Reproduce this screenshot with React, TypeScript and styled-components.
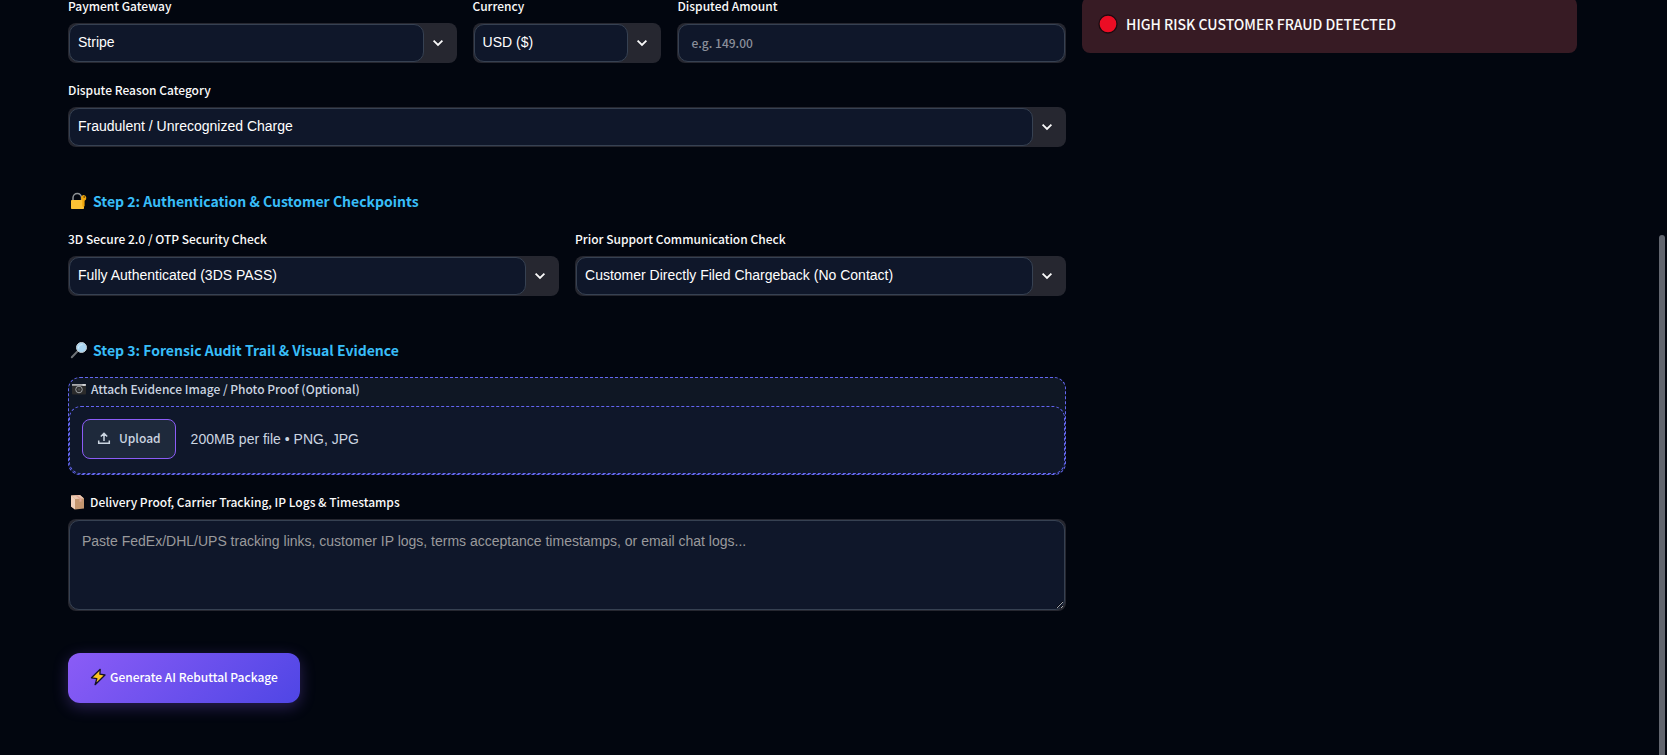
import React, { useId } from "react";
import styled, { createGlobalStyle, css } from "styled-components";

const sans = `"Noto Sans CJK SC", "Noto Sans", sans-serif`;
const arial = `"Liberation Sans", Arial, sans-serif`;

const GlobalStyle = createGlobalStyle`
  *, *::before, *::after { box-sizing: border-box; }
  html, body { margin: 0; background: #02060f; }
  body { color: #fafafa; font-family: ${sans}; overflow: hidden; }
`;

const Viewport = styled.div`
  display: flex;
  height: 100vh;
  overflow: hidden;
  background: #02060f;
`;

const Main = styled.main`
  flex: 1;
  min-width: 0;
  display: flex;
  flex-wrap: wrap;
  align-items: flex-start;
  align-content: flex-start;
  gap: 16px;
  margin-top: -5px;
  padding: 0 80px 0 68px;
`;

const ScrollTrack = styled.div`
  width: 10px;
  padding: 235px 2px 0;
  display: flex;
`;

const ScrollThumb = styled.div`
  flex: 1;
  border-radius: 3px 3px 0 0;
  background: #62666f;
`;

const Column = styled.div<{ $share: string }>`
  flex: 1 1 calc(${(p) => p.$share} - 16px);
  min-width: 0;
`;

const Form = styled.form`
  display: flex;
  flex-direction: column;
  align-items: stretch;
  gap: 16px;
`;

const Row = styled.div`
  display: flex;
  gap: 16px;
`;

const FieldBox = styled.div<{ $share: string }>`
  flex: 1 1 calc(${(p) => p.$share} - 16px);
  min-width: 0;
  display: flex;
  flex-direction: column;
`;

const Label = styled.label`
  display: flex;
  align-items: center;
  gap: 4px;
  height: 22px;
  margin-bottom: 6px;
  font-size: 12px;
  font-weight: 500;
  line-height: 16px;
  white-space: nowrap;
`;

const frame = css`
  border: 1px solid #364152;
  border-radius: 10px;
  background: #0f172a;
  color: #fff;
  outline: none;
`;

const Shell = styled.div`
  display: flex;
  padding: 1px;
  border-radius: 8px;
  background: #262730;
`;

const Select = styled.select`
  ${frame}
  appearance: none;
  flex: 1;
  min-width: 0;
  height: 38px;
  padding: 0 8px 2px;
  font: 14px ${arial};
`;

const Arrow = styled.span`
  width: 32px;
  display: flex;
  align-items: center;
  justify-content: center;
  padding-right: 4px;
  pointer-events: none;
`;

const TextInput = styled.input`
  ${frame}
  flex: 1;
  min-width: 0;
  height: 38px;
  padding: 0 12px 2px;
  font: 500 12px ${sans};
  &::placeholder { color: #8b8f9a; opacity: 1; }
`;

const TextArea = styled.textarea`
  ${frame}
  flex: 1;
  min-width: 0;
  height: 90px;
  padding: 10px 12px;
  font: 14px/20px ${arial};
  resize: vertical;
  &::placeholder { color: #9a9a9c; opacity: 1; }
`;

const StepTitle = styled.h3`
  display: flex;
  align-items: center;
  gap: 5px;
  height: 24px;
  margin: 26px 0 -1px;
  padding-left: 2px;
  color: #38bdf8;
  font-size: 14px;
  font-weight: 700;
  line-height: 24px;
`;

const Uploader = styled.div`
  border: 1px dashed #6366f1;
  border-radius: 12px;
  background: #0f1724;
`;

const UploadLabel = styled.label`
  display: flex;
  align-items: center;
  gap: 4px;
  height: 28px;
  padding: 0 2px 6px;
  color: #cbd5e1;
  font-size: 12px;
  font-weight: 500;
  line-height: 22px;
`;

const DropZone = styled.div`
  display: flex;
  align-items: flex-start;
  gap: 15px;
  height: 68px;
  padding: 12px;
  border: 1px dashed #6366f1;
  border-radius: 12px;
  background: #0f172a;
`;

const UploadButton = styled.button`
  display: flex;
  align-items: center;
  gap: 8px;
  height: 40px;
  padding: 0 14px 2px;
  border: 1px solid #8b5cf6;
  border-radius: 8px;
  background: #1e293b;
  color: #cbd5e1;
  font: 500 12px/24px ${sans};
`;

const UploadHint = styled.span`
  color: #cbd5e1;
  font: 14px/41px ${arial};
`;

const Generate = styled.button`
  display: flex;
  align-items: center;
  align-self: flex-start;
  gap: 3px;
  height: 50px;
  margin-top: 26px;
  padding: 0 22px 2px;
  border: 0;
  border-radius: 12px;
  background: linear-gradient(135deg, #8b5cf6 0%, #4f46e5 100%);
  box-shadow: 0 4px 15px rgba(139, 92, 246, 0.3);
  color: #fff;
  font: 500 12px/24px ${sans};
`;

const Alert = styled.div`
  display: flex;
  align-items: center;
  gap: 8px;
  height: 56px;
  margin-top: 2px;
  padding: 0 16px 2px;
  border-radius: 8px;
  background: #371b24;
  font-size: 14px;
  font-weight: 500;
  line-height: 24px;
`;

const Chevron = () => (
  <svg width="12" height="8" viewBox="0 0 12 8" fill="none" aria-hidden="true">
    <path d="M1.600 1.700 6 6l4.400-4.300" stroke="#fafafa" strokeWidth="1.800" />
  </svg>
);

const LockIcon = () => (
  <svg width="18" height="18" viewBox="0 0 18 18" aria-hidden="true">
    <path d="M3 9V5.800a4.300 4.300 0 0 1 8.600 0V9" fill="none" stroke="#8f9396" strokeWidth="1.500" />
    <rect x="1" y="8" width="13" height="9" rx="0.800" fill="#fcc135" />
    <path d="M13.600 3a3 3 0 0 1 1 5.700V14l-1.200 1.200-1.100-1.200V8.500A3 3 0 0 1 13.600 3Z" fill="#f2a70c" />
    <circle cx="14.200" cy="5" r="0.800" fill="#4b3205" />
  </svg>
);

const LensIcon = () => (
  <svg width="18" height="18" viewBox="0 0 18 18" aria-hidden="true">
    <path d="m1.800 16.200 5.600-5.800" stroke="#6f7377" strokeWidth="2" strokeLinecap="round" />
    <circle cx="11.500" cy="6.500" r="5" fill="#a9d5f2" stroke="#c3cbd1" strokeWidth="1" />
    <path d="M8.500 7.500a3.500 3.500 0 0 1 4-3.800" stroke="#d8eefb" fill="none" />
  </svg>
);

const CameraIcon = () => (
  <svg width="16" height="12" viewBox="0 0 16 12" aria-hidden="true">
    <rect x="1" y="1" width="14" height="10.500" rx="0.800" fill="#2b2b2b" />
    <path d="M1 1h14v1.800H1Z" fill="#a9abad" />
    <circle cx="8" cy="6.500" r="3.300" fill="#2e2e2e" stroke="#9b9fa2" />
    <circle cx="8" cy="6.500" r="1.300" fill="#4c4c4c" />
    <path d="M11.500 1.200h3v1.500h-3Z" fill="#dfe2e4" />
  </svg>
);

const BoxIcon = () => (
  <svg width="18" height="16" viewBox="0 0 18 16" aria-hidden="true">
    <path d="M3 1.500 12 1l4 3.500v10L7 15.500l-4-3Z" fill="#c4966f" />
    <path d="M3 1.500 12 1l4 3.500-9 .5Z" fill="#ecc8b0" />
    <path d="m3 1.500 4 3.500v10.500l-4-3Z" fill="#f0d0bb" />
    <path d="m7 1.300 4.500 3.500v3l2-.2V4.600L9 1.200Z" fill="#e0a795" />
  </svg>
);

const BoltIcon = () => (
  <svg width="17" height="18" viewBox="0 0 17 18" aria-hidden="true">
    <path d="M10.200 1.300 1.500 9.800l5.300.9-1.700 6.000 9.900-9.700-5.100-.8Z" fill="#fcc520" stroke="#16112b" strokeWidth="1.300" strokeLinejoin="round" />
  </svg>
);

const RedDot = () => (
  <svg width="20" height="20" viewBox="0 0 20 20" aria-hidden="true">
    <circle cx="10" cy="10" r="9" fill="#eb0d24" stroke="#1c0b10" strokeWidth="1.300" />
  </svg>
);

const UploadIcon = () => (
  <svg width="14" height="14" viewBox="0 0 14 14" fill="none" stroke="#cbd5e1" strokeWidth="1.500" aria-hidden="true">
    <path d="M7 10V2.500M3.800 5.500 7 2.300l3.200 3.200M1.700 9.500v2.800h10.600V9.500" />
  </svg>
);

type FieldProps = { label: string; share?: string; option: string };

const SelectField = ({ label, share = "100%", option }: FieldProps) => {
  const id = useId();
  return (
    <FieldBox $share={share}>
      <Label htmlFor={id}>{label}</Label>
      <Shell>
        <Select id={id} defaultValue={option}>
          <option>{option}</option>
        </Select>
        <Arrow><Chevron /></Arrow>
      </Shell>
    </FieldBox>
  );
};

export default function App() {
  return (
    <>
      <GlobalStyle />
      <Viewport>
        <Main>
          <Column $share="66.667%">
            <Form onSubmit={(e: React.FormEvent) => e.preventDefault()}>
              <Row>
                <SelectField label="Payment Gateway" share="40%" option="Stripe" />
                <SelectField label="Currency" share="20%" option="USD ($)" />
                <FieldBox $share="40%">
                  <Label htmlFor="amount">Disputed Amount</Label>
                  <Shell><TextInput id="amount" placeholder="e.g. 149.00" /></Shell>
                </FieldBox>
              </Row>
              <SelectField label="Dispute Reason Category" option="Fraudulent / Unrecognized Charge" />

              <StepTitle><LockIcon />Step 2: Authentication &amp; Customer Checkpoints</StepTitle>
              <Row>
                <SelectField label="3D Secure 2.0 / OTP Security Check" share="50%" option="Fully Authenticated (3DS PASS)" />
                <SelectField label="Prior Support Communication Check" share="50%" option="Customer Directly Filed Chargeback (No Contact)" />
              </Row>

              <StepTitle><LensIcon />Step 3: Forensic Audit Trail &amp; Visual Evidence</StepTitle>
              <Uploader>
                <UploadLabel htmlFor="upload"><CameraIcon />Attach Evidence Image / Photo Proof (Optional)</UploadLabel>
                <DropZone>
                  <UploadButton id="upload" type="button"><UploadIcon />Upload</UploadButton>
                  <UploadHint>200MB per file • PNG, JPG</UploadHint>
                </DropZone>
              </Uploader>
              <FieldBox $share="100%">
                <Label htmlFor="proof"><BoxIcon />Delivery Proof, Carrier Tracking, IP Logs &amp; Timestamps</Label>
                <Shell>
                  <TextArea
                    id="proof"
                    placeholder="Paste FedEx/DHL/UPS tracking links, customer IP logs, terms acceptance timestamps, or email chat logs..."
                  />
                </Shell>
              </FieldBox>
              <Generate type="submit"><BoltIcon />Generate AI Rebuttal Package</Generate>
            </Form>
          </Column>
          <Column $share="33.333%">
            <Alert role="alert"><RedDot />HIGH RISK CUSTOMER FRAUD DETECTED</Alert>
          </Column>
        </Main>
        <ScrollTrack><ScrollThumb /></ScrollTrack>
      </Viewport>
    </>
  );
}
